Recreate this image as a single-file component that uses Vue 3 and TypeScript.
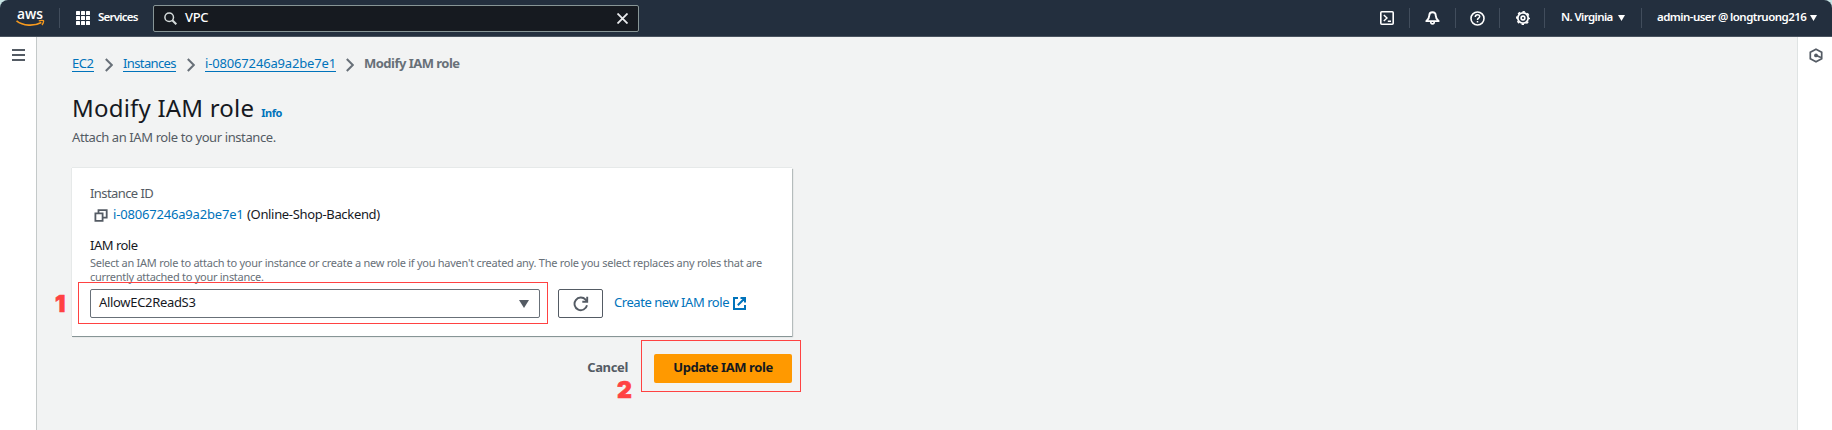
<script setup lang="ts">
interface Crumb {
  label: string
  cls: string
}

const crumbs: Crumb[] = [
  { label: 'EC2', cls: 'crumb-service' },
  { label: 'Instances', cls: 'crumb-list' },
  { label: 'i-08067246a9a2be7e1', cls: 'crumb-id' },
]
const gridSteps = [0, 5, 10]
const instance = { id: 'i-08067246a9a2be7e1', name: 'Online-Shop-Backend' }
const selectedRole = 'AllowEC2ReadS3'
</script>

<template>
  <div class="page">
    <header class="topbar">
      <svg class="aws" width="30" height="30" viewBox="0 -5 30 30">
        <text x="1" y="10.6" textLength="26" lengthAdjust="spacingAndGlyphs">aws</text>
        <path d="M.5 12.8C7 18 18 18.400 25.400 14.400" fill="none" stroke="#f79a1e" stroke-width="1.700" />
        <path d="M22.800 12.900C25.300 12.100 27.800 12 27.600 13.400C27.500 14.800 26.900 15.900 26 17" fill="none" stroke="#f79a1e" stroke-width="1.300" />
      </svg>
      <i class="sep sep-logo"></i>
      <svg class="grid" width="14" height="14" viewBox="0 0 14 14" fill="#fff">
        <template v-for="y in gridSteps" :key="y">
          <rect v-for="x in gridSteps" :key="x" :x="x" :y="y" width="4" height="4" rx=".5" />
        </template>
      </svg>
      <span class="services">Services</span>
      <div class="search">
        <svg width="13" height="13" viewBox="0 0 13 13" fill="none" stroke="#d5dbdb" stroke-width="1.500">
          <circle cx="5.200" cy="5.200" r="4.300" />
          <path d="M8.300 8.300L12.300 12.300" stroke-width="2" />
        </svg>
        <span class="query">VPC</span>
        <svg width="11" height="11" viewBox="0 0 11 11" stroke="#e9ebed" stroke-width="1.800">
          <path d="M.5 .5L10.500 10.500M10.500 .5L.5 10.500" />
        </svg>
      </div>
      <nav class="tools">
        <svg class="tool" width="14" height="14" viewBox="0 0 14 14" fill="none" stroke="#fff" stroke-width="1.600">
          <rect x=".8" y=".8" width="12.400" height="12.400" rx="1" />
          <path d="M3.800 3.900L7 7L3.800 10.100M7.800 10.200H11" stroke-width="1.400" />
        </svg>
        <i class="sep sep-a"></i>
        <svg class="tool bell" width="15" height="14" viewBox="0 0 15 14" fill="none" stroke="#fff" stroke-width="1.900" stroke-linejoin="round">
          <path d="M7.500 1.200C5.300 1.200 4.300 2.800 4.300 4.500C4.300 7 3.700 7.900 1.300 10.100H13.700C11.300 7.900 10.700 7 10.700 4.500C10.700 2.800 9.700 1.200 7.500 1.200Z" />
          <path d="M5.700 10.500C5.700 13.700 9.300 13.700 9.300 10.500" stroke-width="1.600" />
        </svg>
        <i class="sep sep-b"></i>
        <svg class="tool help" width="15" height="15" viewBox="0 0 15 15" fill="none" stroke="#fff" stroke-width="1.600">
          <circle cx="7.500" cy="7.500" r="6.500" />
          <path d="M5.300 6C5.300 3 9.700 3.100 9.700 5.600C9.700 7.200 7.500 7.100 7.500 8.900M7.500 10V11.500" stroke-width="1.500" />
        </svg>
        <i class="sep sep-c"></i>
        <svg class="tool gear" width="14" height="14" viewBox="0 0 14 14" fill="none" stroke="#fff">
          <circle cx="7" cy="7" r="5.200" stroke-width="1.800" />
          <circle cx="7" cy="7" r="6.300" stroke-width="1.400" stroke-dasharray="2.500 2.448" stroke-dashoffset="1.250" />
          <circle cx="7" cy="7" r="1.900" stroke-width="1.600" />
        </svg>
        <i class="sep sep-d"></i>
        <span class="region">N. Virginia</span>
        <svg class="caret" width="7" height="6" viewBox="0 0 7 6"><path d="M0 0H7L3.500 6Z" fill="#fff" /></svg>
        <i class="sep sep-e"></i>
        <span class="account">admin-user @ longtruong216</span>
        <svg class="caret" width="7" height="6" viewBox="0 0 7 6"><path d="M0 0H7L3.500 6Z" fill="#fff" /></svg>
      </nav>
    </header>

    <div class="body">
      <aside class="rail rail-left">
        <svg width="13" height="12" viewBox="0 0 13 12" fill="#545b64">
          <path d="M0 0H13V2H0ZM0 5H13V7H0ZM0 10H13V12H0Z" />
        </svg>
      </aside>

      <main class="main">
        <nav class="crumbs">
          <template v-for="crumb in crumbs" :key="crumb.cls">
            <a class="crumb" :class="crumb.cls">{{ crumb.label }}</a>
            <svg class="chevron" width="8" height="14" viewBox="0 0 8 14" fill="none" stroke="#687078" stroke-width="2">
              <path d="M.8 1L6.800 7L.8 13" />
            </svg>
          </template>
          <span class="crumb-current">Modify IAM role</span>
        </nav>

        <div class="heading">
          <h1>Modify IAM role</h1>
          <a class="info">Info</a>
        </div>
        <p class="lead">Attach an IAM role to your instance.</p>

        <section class="card">
          <div class="label-muted">Instance ID</div>
          <div class="instance">
            <svg width="14" height="13" viewBox="0 0 14 13" fill="none" stroke="#545b64" stroke-width="1.800">
              <path d="M1.400 4.400H8.600V11.900H1.400Z" />
              <path d="M4.500 4V1.100H12.700V8.600H9" />
            </svg>
            <a class="instance-id">{{ instance.id }}</a>
            <span class="instance-name">({{ instance.name }})</span>
          </div>
          <div class="label">IAM role</div>
          <p class="hint">
            <span class="hint-first">Select an IAM role to attach to your instance or create a new role if you haven't created any. The role you select replaces any roles that are</span><br>
            <span class="hint-last">currently attached to your instance.</span>
          </p>
          <div class="controls">
            <div class="select">
              <span>{{ selectedRole }}</span>
              <svg width="10" height="8" viewBox="0 0 10 8"><path d="M0 0H10L5 8Z" fill="#545b64" /></svg>
              <div class="mark mark-select"><b>1</b></div>
            </div>
            <button class="refresh" type="button" aria-label="Refresh">
              <svg width="16" height="16" viewBox="0 0 16 16" fill="none" stroke="#545b64" stroke-width="1.900">
                <path d="M14 9.200A6.300 6.300 0 1 1 12.600 3.700L14 5.500" />
                <path d="M14.200 .8V5.700H9.300" />
              </svg>
            </button>
            <a class="create">Create new IAM role</a>
            <svg class="external" width="13" height="13" viewBox="0 0 13 13" fill="none" stroke="#0073bb" stroke-width="2">
              <path d="M5 1H1V12H12V8M7.500 1H12V5.500M12 1L4.800 8.200" />
            </svg>
          </div>
        </section>

        <div class="actions">
          <button class="cancel" type="button">Cancel</button>
          <div class="submit">
            <button class="update" type="button">Update IAM role</button>
            <div class="mark mark-submit"><b>2</b></div>
          </div>
        </div>
      </main>

      <aside class="rail rail-right">
        <svg width="14" height="15" viewBox="0 0 14 15" fill="none" stroke="#545b64" stroke-width="1.700">
          <path d="M7 1.200L12.700 4.300V10.700L7 13.800L1.300 10.700V4.300Z" />
          <circle cx="7" cy="7.400" r="1.900" fill="#545b64" stroke="none" />
          <path d="M7 7.400L12 9.500" />
        </svg>
      </aside>
    </div>
  </div>
</template>

<style scoped>
* {
  box-sizing: border-box;
}

.page {
  height: 430px;
  overflow: hidden;
  background: #c7e3e3;
  color: #16191f;
  font: 13px/20px "Noto Sans", sans-serif;
  white-space: nowrap;
}

svg,
i {
  flex: none;
  display: block;
}

/* Top navigation */
.topbar {
  display: flex;
  align-items: center;
  height: 37px;
  padding: 0 15px 1px 16px;
  border-radius: 8px 8px 0 0;
  background: #232f3e;
  box-shadow: inset 0 -1px #49535f;
  color: #fff;
  font-size: 11.500px;
  font-weight: 600;
}

.aws text {
  fill: #fff;
  font: 600 15px "Open Sans", sans-serif;
}

.sep {
  width: 1px;
  height: 20px;
  background: #414d5c;
}

.sep-logo {
  margin-left: 13px;
}

.grid {
  margin-left: 16px;
}

.services {
  width: 41px;
  margin: -2px 0 0 8px;
  letter-spacing: -0.750px;
}

.search {
  display: flex;
  align-items: center;
  width: 486px;
  height: 27px;
  margin-left: 14px;
  padding: 0 10px;
  border: 1px solid #879596;
  border-radius: 2px;
  background: #161a20;
}

.query {
  flex: 1;
  margin: -2px 0 0 8px;
  font-size: 13px;
  font-weight: 500;
  letter-spacing: -0.300px;
}

.tools {
  display: flex;
  align-items: center;
  margin-left: auto;
}

.sep-a {
  margin-left: 15px;
}

.bell {
  margin-left: 15px;
}

.sep-b {
  margin-left: 15px;
}

.help {
  margin-left: 14px;
}

.sep-c {
  margin-left: 14px;
}

.gear {
  margin-left: 16px;
}

.sep-d {
  margin-left: 14px;
}

.region {
  width: 51px;
  margin: -2px 0 0 16px;
  letter-spacing: -0.620px;
}

.caret {
  margin-left: 6px;
}

.sep-e {
  margin-left: 16px;
}

.account {
  width: 147px;
  margin: -2px 0 0 15px;
  letter-spacing: -0.550px;
}

/* Page frame */
.body {
  display: flex;
  height: 393px;
  background: #f2f3f3;
}

.rail {
  flex: none;
  background: #fff;
}

.rail-left {
  width: 37px;
  padding: 12px 0 0 12px;
  border-right: 1px solid #c4c9c9;
}

.rail-right {
  width: 35px;
  padding: 11px 0 0 11px;
  border-left: 1px solid #dfe3e3;
}

.main {
  flex: 1;
  padding: 17px 0 0 35px;
}

/* Breadcrumbs */
.crumbs {
  display: flex;
  align-items: flex-start;
  height: 20px;
  line-height: 18px;
}

.crumb {
  height: 18px;
  border-bottom: 1px solid #0073bb;
  color: #0073bb;
}

.crumb-service {
  width: 22px;
  letter-spacing: -0.500px;
}

.crumb-list {
  width: 53px;
  letter-spacing: -0.620px;
}

.crumb-id {
  width: 131px;
  letter-spacing: -0.160px;
}

.chevron {
  margin: 4px 10px 0 11px;
}

.crumb-id + .chevron {
  margin-left: 10px;
}

.crumb-current {
  color: #687078;
  font-weight: 700;
  letter-spacing: -0.520px;
}

/* Title */
.heading {
  display: flex;
  align-items: baseline;
  height: 36px;
  margin-top: 16px;
}

h1 {
  margin: 0;
  font-size: 24px;
  font-weight: 400;
  line-height: 36px;
  letter-spacing: 0.200px;
}

.info {
  margin-left: 7px;
  color: #0073bb;
  font-size: 11px;
  font-weight: 700;
  letter-spacing: -0.450px;
}

.lead {
  margin: 1px 0 0;
  color: #545b64;
  letter-spacing: -0.400px;
}

/* Form */
.card {
  width: 720px;
  height: 168px;
  margin-top: 21px;
  padding: 15px 18px 0;
  background: #fff;
  box-shadow: 0 1px 0 #879596, 1px 1px 1px #b5bcbc, 0 -1px 0 #e6e9e9, -1px 0 0 #e6e9e9;
}

.label-muted {
  color: #545b64;
  letter-spacing: -0.580px;
}

.instance {
  display: flex;
  align-items: center;
  margin-top: 1px;
  padding-left: 4px;
}

.instance svg {
  margin-top: 3px;
}

.instance-id {
  width: 130px;
  margin-left: 5px;
  color: #0073bb;
  letter-spacing: -0.180px;
}

.instance-name {
  margin-left: 4px;
  letter-spacing: -0.330px;
}

.label {
  margin-top: 11px;
  letter-spacing: -0.500px;
}

.hint {
  height: 28px;
  margin: 1px 0 0;
  color: #687078;
  font-size: 11px;
  line-height: 14px;
}

.hint-first {
  letter-spacing: -0.262px;
}

.hint-last {
  letter-spacing: -0.280px;
}

.controls {
  display: flex;
  align-items: center;
  height: 29px;
  margin-top: 5px;
}

.select {
  position: relative;
  display: flex;
  align-items: center;
  justify-content: space-between;
  width: 450px;
  height: 29px;
  padding: 0 10px 0 8px;
  border: 1px solid #687078;
  border-radius: 2px;
  letter-spacing: -0.320px;
}

.select > span,
.create {
  margin-top: -3px;
}

.refresh {
  display: flex;
  align-items: center;
  justify-content: center;
  width: 45px;
  height: 29px;
  margin-left: 18px;
  padding: 0;
  border: 1px solid #545b64;
  border-radius: 2px;
  background: #fff;
}

.create {
  width: 115px;
  margin-left: 11px;
  color: #0073bb;
  letter-spacing: -0.450px;
}

.external {
  margin-left: 4px;
}

/* Actions */
.actions {
  display: flex;
  align-items: center;
  justify-content: flex-end;
  width: 720px;
  margin-top: 18px;
}

.cancel,
.update {
  height: 29px;
  padding: 0 0 3px;
  border: 0;
  border-radius: 2px;
  background: none;
  color: #545b64;
  font: 700 13px/20px "Noto Sans", sans-serif;
  letter-spacing: -0.350px;
}

.submit {
  position: relative;
  margin-left: 26px;
}

.update {
  display: block;
  width: 138px;
  background: #ff9900;
  color: #16191f;
  letter-spacing: -0.420px;
}

/* Step callouts */
.mark {
  position: absolute;
  border: 1px solid #ff4242;
  pointer-events: none;
}

.mark b {
  position: absolute;
  color: #ff4242;
  font: 900 23px/24px Inter, sans-serif;
  -webkit-text-stroke: 0.600px #ff4242;
}

.mark-select {
  inset: -8px -9px -7px -13px;
}

.mark-select b {
  left: -24px;
  top: 9px;
}

.mark-submit {
  inset: -14px -9px -9px -13px;
}

.mark-submit b {
  left: -25px;
  top: 37px;
}
</style>
